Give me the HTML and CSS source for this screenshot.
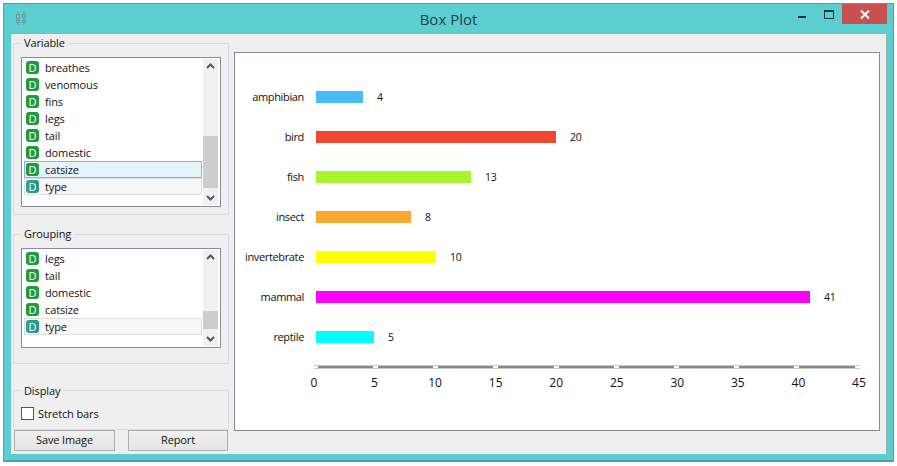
FILE: index.html
```html
<!DOCTYPE html>
<html lang="en">
<head>
<meta charset="utf-8">
<title>Box Plot</title>
<link rel="stylesheet" href="styles.css">
</head>
<body>
<div class="window">
  <header class="titlebar">
    <svg class="app-icon" width="10" height="14" viewBox="0 0 10 14"><g fill="none" stroke="#6f9197" stroke-width="1"><path d="M2 0v3M8 0v3"/><path d="M.5 3.500h3v4h-3zM6.500 3.500h3v3h-3z"/><path d="M2 8v1M8 7v2"/><path d="M.5 9.500h3v2h-3zM6.500 9.500h3v2h-3z"/><path d="M2 12v2M8 12v2"/></g></svg>
    <h1 class="title">Box Plot</h1>
    <div class="controls">
      <button class="ctl ctl-min"><span class="min"></span></button>
      <button class="ctl ctl-max"><span class="max"></span></button>
      <button class="ctl close"><svg width="10" height="9" viewBox="0 0 10 9"><path d="M1 .5l8 8M9 .5l-8 8" stroke="#fff" stroke-width="2" fill="none"/></svg></button>
    </div>
  </header>
  <div class="content">
    <aside class="sidebar">
      <fieldset class="group group-var">
        <legend>Variable</legend>
        <div class="list list-var">
          <ul class="rows">
            <li class="row"><i class="d">D</i>breathes</li>
            <li class="row"><i class="d">D</i>venomous</li>
            <li class="row"><i class="d">D</i>fins</li>
            <li class="row"><i class="d">D</i>legs</li>
            <li class="row"><i class="d">D</i>tail</li>
            <li class="row"><i class="d">D</i>domestic</li>
            <li class="row selected"><i class="d">D</i>catsize</li>
            <li class="row current"><i class="d teal">D</i>type</li>
          </ul>
          <div class="scroll">
            <svg class="arrow" width="15" height="15" viewBox="0 0 15 15"><path d="M4 9l3.500-3.500L11 9" fill="none" stroke="#555" stroke-width="2"/></svg>
            <div class="track track-var"><div class="thumb"></div></div>
            <svg class="arrow" width="15" height="15" viewBox="0 0 15 15"><path d="M4 6l3.500 3.500L11 6" fill="none" stroke="#555" stroke-width="2"/></svg>
          </div>
        </div>
      </fieldset>
      <fieldset class="group group-grp">
        <legend>Grouping</legend>
        <div class="list list-grp">
          <ul class="rows">
            <li class="row"><i class="d">D</i>legs</li>
            <li class="row"><i class="d">D</i>tail</li>
            <li class="row"><i class="d">D</i>domestic</li>
            <li class="row"><i class="d">D</i>catsize</li>
            <li class="row current"><i class="d teal">D</i>type</li>
          </ul>
          <div class="scroll">
            <svg class="arrow" width="15" height="15" viewBox="0 0 15 15"><path d="M4 9l3.500-3.500L11 9" fill="none" stroke="#555" stroke-width="2"/></svg>
            <div class="track track-grp"><div class="thumb"></div></div>
            <svg class="arrow" width="15" height="15" viewBox="0 0 15 15"><path d="M4 6l3.500 3.500L11 6" fill="none" stroke="#555" stroke-width="2"/></svg>
          </div>
        </div>
      </fieldset>
      <fieldset class="group group-disp">
        <legend>Display</legend>
        <label class="check"><span class="box"></span>Stretch bars</label>
      </fieldset>
      <div class="buttons">
        <button class="btn">Save Image</button>
        <button class="btn">Report</button>
      </div>
    </aside>
    <main class="plot">
      <div class="bars">
        <div class="bar-row"><span class="name">amphibian</span><span class="bar" style="width:47px;background:#47bbfb"></span><span class="val">4</span></div>
        <div class="bar-row"><span class="name">bird</span><span class="bar" style="width:240px;background:#f0482f"></span><span class="val">20</span></div>
        <div class="bar-row"><span class="name">fish</span><span class="bar" style="width:155px;background:#a8f52b"></span><span class="val">13</span></div>
        <div class="bar-row"><span class="name">insect</span><span class="bar" style="width:95px;background:#f9a92f"></span><span class="val">8</span></div>
        <div class="bar-row"><span class="name">invertebrate</span><span class="bar" style="width:120px;background:#ffff00"></span><span class="val">10</span></div>
        <div class="bar-row"><span class="name">mammal</span><span class="bar" style="width:494px;background:#ff00ff"></span><span class="val">41</span></div>
        <div class="bar-row"><span class="name">reptile</span><span class="bar" style="width:58px;background:#00ffff"></span><span class="val">5</span></div>
      </div>
      <div class="axis">
        <div class="axis-line"></div>
        <div class="ticks">
          <span class="tick"><b>0</b></span><span class="tick"><b>5</b></span><span class="tick"><b>10</b></span><span class="tick"><b>15</b></span><span class="tick"><b>20</b></span><span class="tick"><b>25</b></span><span class="tick"><b>30</b></span><span class="tick"><b>35</b></span><span class="tick"><b>40</b></span><span class="tick"><b>45</b></span>
        </div>
      </div>
    </main>
  </div>
</div>
</body>
</html>
```
FILE: styles.css
```css
* { box-sizing: border-box; }
html, body { margin: 0; height: 100%; background: #fff; }
body { padding: 3px 3px 4px 3px; font: 11px/16px "Open Sans", sans-serif; letter-spacing: -.12px; color: #111; overflow: hidden; }
.window {
  height: 459px; width: 891px; display: flex; flex-direction: column;
  background: #5bcfcf; border: 1px solid #4aa3a8; border-bottom-width: 2px;
  padding: 0 6px 6px 7px;
}
.titlebar { height: 29px; flex: none; display: flex; align-items: flex-start; }
.app-icon { margin: 7px 0 0 5px; flex: none; }
.title {
  flex: 1; margin: 5px 0 0; text-align: center; font: 400 15px/20px "Open Sans", sans-serif; letter-spacing: 0; color: #1f4145;
  padding-left: 80px;
}
.controls { display: flex; height: 20px; flex: none; }
.ctl { border: 0; padding: 0; background: none; width: 22px; display: flex; align-items: center; justify-content: center; }
.ctl-min { margin-right: 5px; }
.ctl-max { margin-right: 2px; }
.min { width: 8px; height: 2px; margin-top: 6px; background: #1e2e32; }
.max { width: 10px; height: 9px; border: 1px solid #1e3438; border-top-width: 2px; }
.close { width: 45px; background: #c75050; }
.content {
  flex: 1; min-height: 0; background: #efefef; display: flex; gap: 5px;
  border-top: 1px solid #9db0b4; border-right: 1px solid #9db0b4;
  padding: 18px 6px 23px 2px;
}
.sidebar { width: 216px; flex: none; display: flex; flex-direction: column; margin-top: -16px; margin-bottom: -20px; }
.group { margin: 0; border: 1px solid #dcdcdc; padding: 0 7px; min-width: 0; }
.group legend { padding: 0 3px; margin-left: 0; line-height: 14px; }
.group-var { height: 183px; padding-top: 7px; }
.group-grp { height: 139px; margin-top: 12px; padding-top: 7px; }
.group-disp { height: 47px; margin-top: 20px; padding-top: 8px; }
.list { border: 1px solid #8a8a96; background: #fff; display: flex; padding: 1px 2px 1px 2px; }
.list-var { height: 150px; }
.list-grp { height: 100px; }
.rows { flex: 1; list-style: none; margin: 0; padding: 0; min-width: 0; }
.row { height: 17px; display: flex; align-items: center; padding-left: 1px; white-space: nowrap; border: 1px solid transparent; }
.row.selected { background: #e5f3fa; border-color: #7db8e0; }
.row.current { background: #f7f7f7; border-color: #dedede; }
.d {
  width: 13px; height: 13px; border-radius: 3px; background: #1f9b3f; color: #fff; font-style: normal;
  font: 400 11px/13px "Open Sans", sans-serif; letter-spacing: 0; text-align: center; margin-right: 6px; flex: none;
}
.d.teal { background: linear-gradient(90deg, #2aa3a0, #1f9a7e); }
.scroll { width: 15px; margin-left: 1px; background: #f0f0f0; display: flex; flex-direction: column; flex: none; }
.arrow { flex: none; }
.track { flex: 1; display: flex; flex-direction: column; justify-content: flex-end; }
.thumb { background: #cdcdcd; }
.track-var .thumb { height: 52px; margin-bottom: 2px; }
.track-grp .thumb { height: 18px; margin-bottom: 2px; }
.check { display: flex; align-items: center; gap: 4px; }
.box { width: 13px; height: 13px; border: 1px solid #555; background: #fff; }
.buttons { display: flex; justify-content: space-between; padding: 0 1px; }
.btn {
  width: 101px; height: 21px; border: 1px solid #adadad; padding: 0;
  background: linear-gradient(#f0f0f0, #e5e5e5); font: inherit; letter-spacing: inherit; color: #111;
}
.btn:last-child { width: 100px; }
.plot { flex: 1; min-width: 0; background: #fff; border: 1px solid #8a8a96; display: flex; flex-direction: column; padding-top: 24px; }
.bars { display: flex; flex-direction: column; }
.bar-row { height: 40px; display: flex; align-items: center; }
.name { width: 69px; text-align: right; margin-right: 12px; color: #111; letter-spacing: -.35px; }
.bar { height: 12px; flex: none; }
.val { margin-left: 14px; letter-spacing: -.3px; font-size: 10.5px; }
.axis { margin: 8px 0 0 79px; width: 546px; }
.axis-line {
  height: 4px;
  background:
    repeating-linear-gradient(90deg, #fff 0 3.8px, #888 3.8px 59px, #fff 59px 60.2px) 0 1px / 100% 2px no-repeat,
    #c8c8c8;
}
.ticks { display: flex; justify-content: space-between; margin-top: 6px; padding-right: 1px; font-size: 12px; letter-spacing: 0; }
.tick { width: 0; display: flex; justify-content: center; }
.tick b { font-weight: 400; }
```
